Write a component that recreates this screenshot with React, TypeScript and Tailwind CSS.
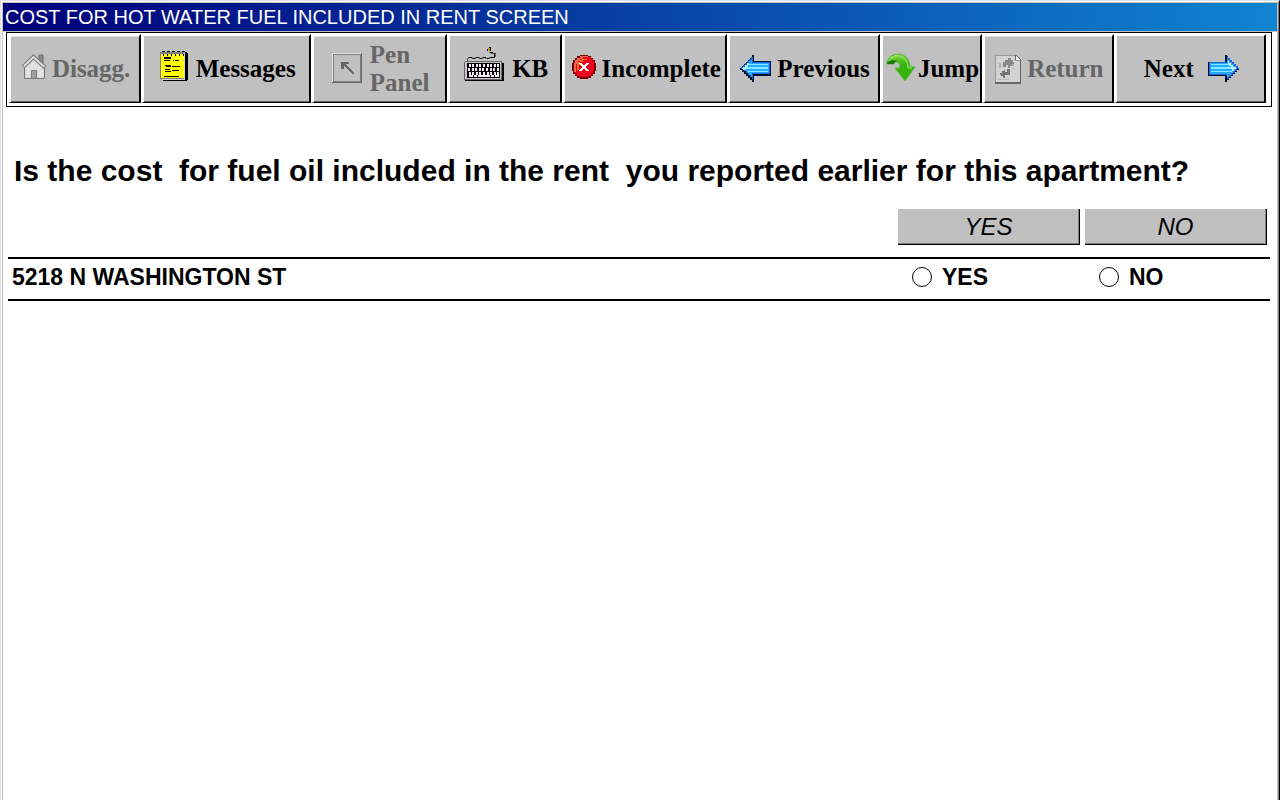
import { useState, type ReactNode } from "react";
import clsx from "clsx";

function HouseIcon() {
  return (
    <svg className="mb-1" width="24" height="26" viewBox="0 0 24 26">
      <path d="M17 1h4v9l-4-4z" fill="#8a8a8a" stroke="#6a6a6a" />
      <path d="M2.5 12v12.5h20V12L11.500 3z" fill="#d6d6d6" stroke="#777" />
      <path d="M4 23h17v-8L12 7l-8 7z" fill="#e2e2e2" />
      <path d="M1 13L11.500 3 23 13.500" fill="none" stroke="#777" strokeWidth="4" />
      <path d="M1.500 12.500L11.500 3 22.500 13" fill="none" stroke="#dedede" strokeWidth="2" />
      <path d="M9.500 24.500v-8h5v8z" fill="#a0a0a0" stroke="#777" />
    </svg>
  );
}

function NotepadIcon() {
  return (
    <svg className="mb-1" width="28" height="31" viewBox="0 0 28 31" shapeRendering="crispEdges">
      <path d="M25 1h2v1h1v27h-1v1H3v-1h22z" fill="#000" />
      <path d="M0 1h25v28H1v-1H0z" fill="#808080" />
      <path d="M24 2h1v27H2v-1h22z" fill="#d8d8d8" />
      <path d="M1 3h23v24H1z" fill="#ff0" />
      <path d="M2 0h3v1H2zM7 0h3v1H7zM12 0h3v1h-3zM17 0h3v1h-3zM22 0h3v1h-3z" fill="#000" />
      <path d="M3 3h1v2H3zM7 3h1v2H7zM11 3h1v2h-1zM15 3h1v2h-1zM19 3h1v2h-1zM23 3h1v2h-1z" fill="#000" />
      <path d="M4 6h7v2H4zM4 9h6v1H4zM13 9h1v1h-1zM15 9h4v1h-4zM5 14h6v1H5zM6 15h5v1H6zM12 15h8v1h-8zM5 18h5v1H5zM5 20h6v1H5zM12 19h7v1h-7zM4 25h15v1H4z" fill="#000" />
    </svg>
  );
}

function PenPanelIcon() {
  return (
    <svg className="mb-0.5" width="30" height="30" viewBox="0 0 30 30" shapeRendering="crispEdges">
      <path d="M0 0h30v30H0z" fill="#666" />
      <path d="M0 0h29v29H0z" fill="#e0e0e0" />
      <path d="M1 1h28v28H1z" fill="#808080" />
      <path d="M2 2h26v26H2z" fill="#c0c0c0" />
      <path d="M9 9h8v2h-3v1h1v1h1v1h1v1h1v1h1v1h1v1h1v1h1v2h-2v-1h-1v-1h-1v-1h-1v-1h-1v-1h-1v-1h-1v-1h-1v-1h-1v3H9z" fill="#666" />
    </svg>
  );
}

function KeyboardIcon() {
  const rows = [
    [5, 8, 12, 15, 19, 23, 26, 30, 33],
    [4, 8, 11, 15, 18, 22, 26, 29, 33],
    [5, 8, 12, 15, 19, 23, 26, 30, 33],
  ];
  return (
    <svg className="mb-2" width="40" height="36" viewBox="0 0 40 36" shapeRendering="crispEdges">
      <path d="M3 13v-2h1v-1h4v1h3v-1h4v1h3v-1h3v1h4v-1h5V9h1V6h-4V5h-2V4" transform="translate(0.500 0.500)" fill="none" stroke="#666" />
      <path d="M5 10h3v1H5zM9 11h2v1H9zM12 10h3v1h-3zM16 11h2v1h-2zM19 10h3v1h-3zM23 11h2v1h-2zM26 10h4v1h-4zM30 6h1v4h-1zM26 5h3v1h-3z" fill="#000" />
      <path d="M23 2h1V1h1V0h2v4h-4z" fill="#000" />
      <path d="M24 1h2v3h-2z" fill="#b0a800" />
      <path d="M1 16h39v18H1z" fill="#000" />
      <path d="M0 15h1v-1h37v19H0z" fill="#666" />
      <path d="M1 15h36v17H1z" fill="#c8c4cc" />
      <path d="M3 16h33v15H3z" fill="#000" />
      {rows.map((row, i) =>
        row.map((x) => <rect key={`${i}-${x}`} x={x} y={17 + i * 4} width="2" height="3" fill="#f4eef4" />)
      )}
      <path d="M5 28h4v2H5zM10 28h3v2h-3zM14 28h12v2H14zM27 28h3v2h-3zM31 28h4v2h-4z" fill="#f4eef4" />
    </svg>
  );
}

function ErrorIcon() {
  return (
    <svg className="mb-1" width="24" height="24" viewBox="0 0 24 24" shapeRendering="crispEdges">
      <path d="M8 0h8v1h3v2h2v2h2v3h1v8h-1v3h-2v2h-2v2h-3v1H8v-1H5v-2H3v-2H1v-3H0V8h1V5h2V3h2V1h3z" fill="#7a0000" />
      <path d="M8 1h8v1h3v2h2v2h1v10h-1v3h-2v2h-3v1H8v-1H5v-2H3v-3H2V8h1V5h2V3h3z" fill="#f00020" />
      <path d="M8 1h8v1h-5v2H8v2H6v3H4v8H2V8h1V5h2V3h3z" fill="#f86858" />
      <path d="M10 4h5v1h-4v2H8v3H7v5H5V9h1V7h2V5h2z" fill="#ff7800" />
      <path d="M7 8h3v1h1v1h2V9h1V8h3v1h-1v1h-1v1h-1v2h1v1h1v1h1v1h-3v-1h-1v-1h-2v1h-1v1H7v-1h1v-1h1v-1h1v-2H9v-1H8V9H7z" fill="#fff" />
    </svg>
  );
}

function ArrowIcon({ right = false }: { right?: boolean }) {
  return (
    <svg width="31" height="27" viewBox="0 0 31 27" shapeRendering="crispEdges">
      {right ? (
        <>
          <path d="M17 0h2v1h1v2h2v2h2v2h2v2h2v2h2v2h1v2h-2v2h-2v2h-2v2h-2v2h-2v2h-2v2h-2v-6H0V7h17z" fill="#001030" />
          <path d="M19 1h1v2h2v2h2v2h2v2h2v2h2v2h1v1h-2v2h-2v2h-2v2h-2v2h-2v2h-2v-4H1V7h18z" fill="#2060d8" />
          <path d="M19 4h1v1h2v2h2v2h2v2h2v2h1v1h-2v2h-2v2h-2v2h-2v2h-2v-3H2V8h17z" fill="#28a8ff" />
          <path d="M3 9h20v1H3zM3 12h23v2H3zM3 16h21v1H3z" fill="#80ecff" />
          <path d="M20 6h1v2h2v2h2v2h3v2h-2v2h-2v-2h-1v-3h-2V9h-1z" fill="#b8f4ff" />
        </>
      ) : (
        <>
          <path d="M12 0h2v6h17v15H14v6h-2v-2h-2v-2H8v-2H6v-2H4v-2H2v-2H0v-2h2v-2h2V9h2V7h2V5h2V3h2z" fill="#001030" />
          <path d="M11 2h2v5h17v12H13v5h-1v-2h-2v-2H8v-2H6v-2H4v-2H1v-2h2v-2h2V8h2V6h2V4h2z" fill="#2060d8" />
          <path d="M11 5h1v3h17v10H12v4h-1v-2H9v-2H7v-2H5v-2H3v-2h2v-2h2V8h2V6h2z" fill="#28a8ff" />
          <path d="M9 9h19v1H9zM6 12h22v2H6zM8 16h20v1H8z" fill="#80ecff" />
          <path d="M2 13h1v-1h2v-2h2V8h2v2H8v2H7v2H5v1H3v-1H2z" fill="#b8f4ff" />
        </>
      )}
    </svg>
  );
}

function JumpIcon() {
  return (
    <svg className="mb-0.5" width="30" height="30" viewBox="0 0 30 30">
      <defs>
        <linearGradient id="jump" x1="0" y1="0" x2="0" y2="1">
          <stop offset="0" stopColor="#86dc48" />
          <stop offset="0.4" stopColor="#38b010" />
          <stop offset="1" stopColor="#30b808" />
        </linearGradient>
      </defs>
      <path d="M1 10C2 4 7 1 13 1c7 1 11 6 11 13h5L19 28 9 15h5c0-4-1-6-4-6-1 0-2 0-2 2H1z" fill="url(#jump)" stroke="#58b838" />
      <path d="M3 8c2-4 6-6 10-5 6 1 9 6 9 12h4" fill="none" stroke="#a8ec78" />
      <path d="M1 11h7c0-2 2-3 4-2-1-2-8-3-11 1z" fill="#187800" />
    </svg>
  );
}

function ReturnIcon() {
  return (
    <svg width="26" height="29" viewBox="0 0 26 29" shapeRendering="crispEdges">
      <path d="M0 0h21l5 5v24H0z" fill="#666" />
      <path d="M0 0h20v5h5v22H0z" fill="#999" />
      <path d="M1 1h19v5h5v21H1z" fill="#d2d2d2" />
      <path d="M21 1l4 4h-4z" fill="#eee" />
      <path d="M8 12V7h2V5h3V3h3v2h2v2h1v2h-2v2h-2v2h-2v-3h-2v2z" fill="#888" />
      <path d="M4 8h2v5H4zM17 9h2v2h-2z" fill="#b0b0b0" />
      <path d="M12 14h3v6h-5v3H8v-2H6v-1H5v-2h2v-2h2v-1h1v2h2z" fill="#777" />
      <path d="M3 24h11v1H3zM17 13h3v1h-3z" fill="#bbb" />
    </svg>
  );
}

interface ToolButtonProps {
  className: string;
  gap?: string;
  disabled?: boolean;
  children: ReactNode;
}

function ToolButton({ className, gap = "gap-1.5", disabled, children }: ToolButtonProps) {
  return (
    <button
      disabled={disabled}
      className={clsx(
        "flex min-w-0 border-t-2 border-l-3 border-r-2 border-b border-t-white border-l-white border-r-black border-b-black bg-[#c0c0c0]",
        disabled ? "text-[#666]" : "text-black",
        className
      )}
    >
      <span
        className={clsx(
          "flex h-full w-full items-center justify-center border-b border-b-[#666] pl-0.5",
          disabled && "border-t border-t-[#e0e0e0]",
          gap
        )}
      >
        {children}
      </span>
    </button>
  );
}

const answers = ["YES", "NO"];
const addresses = ["5218 N WASHINGTON ST"];

export default function App() {
  const [selected, setSelected] = useState<Record<string, string>>({});

  const selectAll = (answer: string) =>
    setSelected(Object.fromEntries(addresses.map((a) => [a, answer])));

  return (
    <div className="flex min-h-screen flex-col border-t border-l border-r border-t-[#e0e0e0] border-l-[#e0e0e0] border-r-black">
      <div className="flex grow flex-col border-t border-l border-r border-t-white border-l-white border-r-[#808080]">
        <div className="grow border-t border-l border-r border-[#c0c0c0] bg-white font-['Liberation_Sans',Arial,sans-serif] text-black">
          <header className="h-[29px] border-b border-[#c0c0c0] bg-linear-to-r/srgb from-[#00007b] to-[#1084d0] px-0.5">
            <h1 className="text-[20px] leading-7 text-white">COST FOR HOT WATER FUEL INCLUDED IN RENT SCREEN</h1>
          </header>

          {/* Toolbar */}
          <nav className="mr-[5px] ml-[3px] flex h-[75px] border border-black pt-px pr-[5px] pb-[3px] pl-px font-['Liberation_Serif','Times_New_Roman',serif] text-[25px] leading-7 font-bold">
            <ToolButton className="flex-[133]" disabled>
              <HouseIcon />
              Disagg.
            </ToolButton>
            <ToolButton className="flex-[171]" gap="gap-2">
              <NotepadIcon />
              Messages
            </ToolButton>
            <ToolButton className="flex-[136]" gap="gap-2" disabled>
              <PenPanelIcon />
              <span className="text-left">
                Pen
                <br />
                Panel
              </span>
            </ToolButton>
            <ToolButton className="flex-[114]" gap="gap-2">
              <KeyboardIcon />
              KB
            </ToolButton>
            <ToolButton className="flex-[166]">
              <ErrorIcon />
              Incomplete
            </ToolButton>
            <ToolButton className="flex-[153]">
              <ArrowIcon />
              Previous
            </ToolButton>
            <ToolButton className="flex-[101]" gap="gap-0.5">
              <JumpIcon />
              Jump
            </ToolButton>
            <ToolButton className="flex-[131]" disabled>
              <ReturnIcon />
              Return
            </ToolButton>
            <ToolButton className="flex-[153]" gap="gap-3.5">
              Next
              <ArrowIcon right />
            </ToolButton>
          </nav>

          <main className="mr-[7px] ml-[5px] pt-12">
            <h2 className="px-1.5 text-[30px] leading-8 font-bold whitespace-pre-wrap">
              {"Is the cost  for fuel oil included in the rent  you reported earlier for this apartment?"}
            </h2>

            <div className="mt-[22px] grid grid-cols-[1fr_187px_187px]">
              {answers.map((answer) => (
                <button
                  key={answer}
                  onClick={() => selectAll(answer)}
                  className="mr-[3px] ml-0.5 h-9 border-r border-b border-black bg-[#c0c0c0] text-[24px] italic shadow-[inset_-1px_-1px_0_#808080] first:col-start-2"
                >
                  {answer}
                </button>
              ))}
            </div>

            {/* One row for each address */}
            <div className="mt-3 border-t-2 border-black text-[23px] leading-9 font-bold">
              {addresses.map((address) => (
                <div
                  key={address}
                  role="radiogroup"
                  aria-label={address}
                  className="grid h-[42px] grid-cols-[1fr_187px_187px] border-b-2 border-black"
                >
                  <span className="pl-1">{address}</span>
                  {answers.map((answer) => (
                    <label key={answer} className="flex h-9 items-center gap-2.5 pl-4">
                      <input
                        type="radio"
                        name={address}
                        checked={selected[address] === answer}
                        onChange={() => setSelected({ ...selected, [address]: answer })}
                        className="size-5 appearance-none rounded-full border border-black bg-white checked:border-[6px]"
                      />
                      {answer}
                    </label>
                  ))}
                </div>
              ))}
            </div>
          </main>
        </div>
      </div>
    </div>
  );
}
